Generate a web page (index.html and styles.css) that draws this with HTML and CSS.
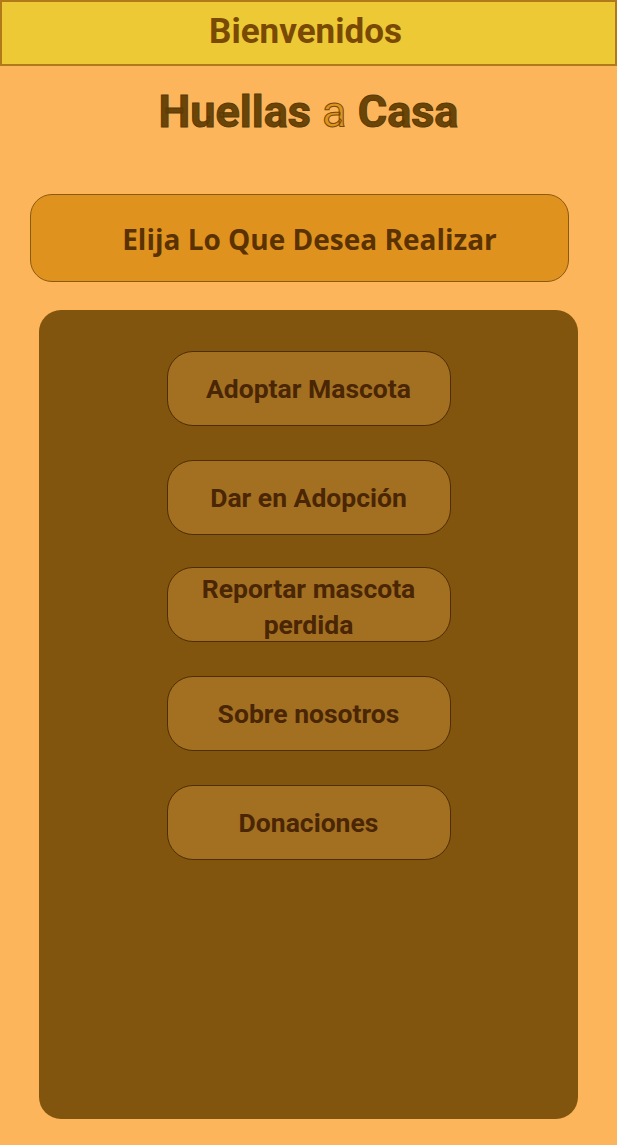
FILE: index.html
```html
<!DOCTYPE html>
<html lang="es">
<head>
<meta charset="utf-8">
<title>Huellas a Casa</title>
<link rel="stylesheet" href="styles.css">
</head>
<body>
<header class="topbar">Bienvenidos</header>
<h1 class="brand">Huellas <span class="brand-a">a</span> Casa</h1>
<div class="prompt">Elija Lo Que Desea Realizar</div>
<main class="panel">
  <button class="opt">Adoptar Mascota</button>
  <button class="opt">Dar en Adopción</button>
  <button class="opt opt-two">Reportar mascota perdida</button>
  <button class="opt">Sobre nosotros</button>
  <button class="opt">Donaciones</button>
</main>
</body>
</html>
```
FILE: styles.css
```css
* { box-sizing: border-box; }
html, body { margin: 0; padding: 0; }
body {
  background: #fdb55b;
  height: 1145px;
  font-family: Roboto, "Liberation Sans", sans-serif;
  display: flex;
  flex-direction: column;
}
.topbar {
  height: 66px;
  background: #ecc935;
  border: 2px solid #b07a1a;
  color: #7a4a05;
  font-family: Roboto, sans-serif;
  font-weight: 700;
  font-size: 35px;
  display: flex;
  align-items: center;
  justify-content: center;
  padding-bottom: 4px;
  padding-right: 6px;
}
.brand {
  margin: 18px 0 0;
  height: 56px;
  text-align: center;
  font-family: Roboto, sans-serif;
  font-size: 45px;
  line-height: 56px;
  font-weight: 700;
  color: #6b4507;
  -webkit-text-stroke: 1px #5a3a05;
}
.brand-a {
  color: #e09420;
  font-weight: 400;
  -webkit-text-stroke: 1px #7a4a05;
}
.prompt {
  margin: 54px 48px 0 30px;
  height: 88px;
  border-radius: 22px;
  background: #e0921f;
  border: 1px solid #8a5a10;
  color: #5a3200;
  font-family: "Open Sans", "Noto Sans", sans-serif;
  font-weight: 700;
  font-size: 28px;
  display: flex;
  align-items: center;
  justify-content: center;
  padding-left: 20px;
  padding-top: 2px;
}
.panel {
  margin: 28px 39px 0 39px;
  height: 809px;
  background: #82550e;
  border-radius: 22px;
  display: flex;
  flex-direction: column;
  align-items: center;
  padding-top: 41px;
  gap: 34px;
}
.opt {
  width: 284px;
  height: 75px;
  background: #a37022;
  border: 1px solid #4f2e05;
  border-radius: 26px;
  color: #4a2605;
  font-family: Roboto, sans-serif;
  font-weight: 700;
  font-size: 26.5px;
  line-height: 36px;
  padding: 0 14px;
  margin: 0;
}
.opt-two {
  margin-top: -2px;
  padding-top: 3px;
}
```
